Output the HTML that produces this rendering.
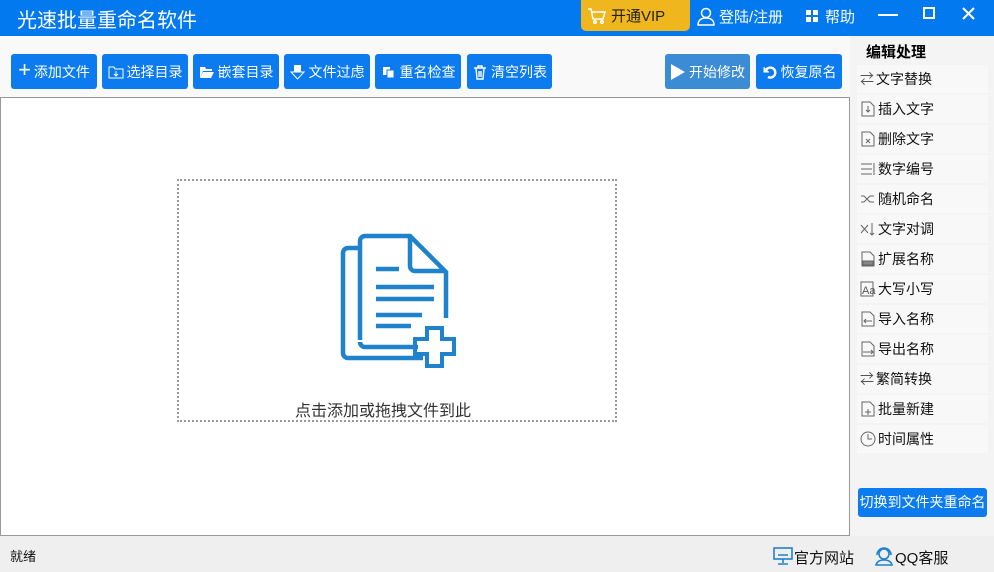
<!DOCTYPE html>
<html><head><meta charset="utf-8"><style>
*{margin:0;padding:0;box-sizing:border-box}
body{width:994px;height:572px;overflow:hidden;background:#f9f9f9;font-family:"Liberation Sans","Noto Sans CJK SC",sans-serif;position:relative;font-size:14px}
.abs{position:absolute}
.title{left:0;top:0;width:994px;height:36px;background:#0379f0;color:#fff}
.btn{position:absolute;top:54px;height:35px;background:#0b7bef;border-radius:3px;color:#fff;font-size:14px;display:flex;align-items:center;justify-content:center;gap:3px}
.side{left:850px;top:36px;width:144px;height:501px;background:#f4f4f4}
.item{position:absolute;left:857px;width:131px;height:28px;background:#f8f8f8;font-size:14px;color:#111;display:flex;align-items:center;padding-left:3px;gap:2px}
.ic{width:16px;height:16px;display:inline-block}
</style></head><body>
<div class="abs title">
 <div class="abs" style="left:17px;top:4px;font-size:20px">光速批量重命名软件</div>
 <div class="abs" style="left:581px;top:0;width:109px;height:31px;background:#f0b61e;border-radius:0 0 5px 5px;color:#222;font-size:15px;padding:5px 0 0 30px">开通VIP</div>
 <svg class="abs" style="left:587px;top:7px" width="20" height="18" viewBox="0 0 20 18" fill="none" stroke="#fff" stroke-width="1.5"><path d="M1 2h3l2 10h10l2-7H5"/><circle cx="8" cy="15" r="1.3"/><circle cx="15" cy="15" r="1.3"/></svg>
 <svg class="abs" style="left:696px;top:6px" width="20" height="20" viewBox="0 0 20 20" fill="none" stroke="#fff" stroke-width="1.5"><circle cx="10" cy="7" r="4.5"/><path d="M2 19c0-5 3.5-7 8-7s8 2 8 7z"/></svg>
 <div class="abs" style="left:719px;top:6px;font-size:15px">登陆/注册</div>
 <svg class="abs" style="left:806px;top:10px" width="12" height="12"><rect x="0" y="0" width="5" height="5" fill="#fff"/><rect x="7" y="0" width="5" height="5" fill="#fff"/><rect x="0" y="7" width="5" height="5" fill="#fff"/><rect x="7" y="7" width="5" height="5" fill="#fff"/></svg>
 <div class="abs" style="left:825px;top:6px;font-size:15px">帮助</div>
 <div class="abs" style="left:878px;top:14px;width:20px;height:2px;background:#fff"></div>
 <div class="abs" style="left:923px;top:7px;width:12px;height:12px;border:2px solid #fff"></div>
 <svg class="abs" style="left:962px;top:7px" width="13" height="13"><path d="M1 1L12 12M12 1L1 12" stroke="#fff" stroke-width="2"/></svg>
</div>
<div class="btn" style="left:11px;width:86px"><span style="font-size:22px;line-height:1;margin-top:-3px">+</span>添加文件</div>
<div class="btn" style="left:102px;width:86px"><svg class="ic" viewBox="0 0 16 16" fill="none" stroke="#fff"><path d="M1 3h5l1 2h8v9H1z"/><path d="M8 7v5M6 10l2 2 2-2"/></svg>选择目录</div>
<div class="btn" style="left:193px;width:86px"><svg class="ic" viewBox="0 0 16 16" fill="#fff"><path d="M1 3h5l1 2h6v2H4l-3 7z"/><path d="M4 8h11l-3 6H1z"/></svg>嵌套目录</div>
<div class="btn" style="left:284px;width:86px"><svg class="ic" viewBox="0 0 16 16" fill="#fff"><rect x="4" y="1" width="7" height="7"/><path d="M1 8h13l-6.5 7z" fill="none" stroke="#fff"/></svg>文件过虑</div>
<div class="btn" style="left:375px;width:86px"><svg class="ic" viewBox="0 0 16 16" fill="#fff"><rect x="2" y="3" width="7" height="8"/><rect x="6" y="6" width="7" height="8" stroke="#0b7bef"/></svg>重名检查</div>
<div class="btn" style="left:467px;width:85px"><svg class="ic" viewBox="0 0 16 16" fill="none" stroke="#fff" stroke-width="1.4"><path d="M2 4h12M6 4V2h4v2M4 4l1 11h6l1-11M7 7v6M9 7v6"/></svg>清空列表</div>
<div class="btn" style="left:665px;width:85px;background:#3b8bd5"><svg width="16" height="18"><path d="M1 1l14 8-14 8z" fill="#fff"/></svg>开始修改</div>
<div class="btn" style="left:756px;width:86px"><svg class="ic" viewBox="0 0 16 16" fill="none" stroke="#fff" stroke-width="2.4"><path d="M4 6a5 5 0 1 1 2 7"/><path d="M2 3v5h5" fill="#fff" stroke-width="1"/></svg>恢复原名</div>
<div class="abs" style="left:0;top:97px;width:850px;height:439px;background:#fff;border:1px solid #999"></div>
<div class="abs" style="left:177px;top:179px;width:440px;height:243px;border:2px dotted #999"></div>
<svg class="abs" style="left:320px;top:220px" width="150" height="150" viewBox="0 0 150 150" fill="none" stroke="#1f82cc" stroke-width="4.5"><path d="M40 28h-12a5 5 0 0 0-5 5v100a5 5 0 0 0 5 5h75"/><path d="M40 120V21a5 5 0 0 1 5-5h45l36 36v46M90 16v30a5 5 0 0 0 5 5h31M98 127H45a5 5 0 0 1-5-5"/><path d="M56 49h23M56 67h58M56 79h58M56 95h46M56 106h35"/><path d="M107 108h15v11h12v15h-12v12h-15v-12h-12v-15h12z" stroke-width="4"/></svg>
<div class="abs" style="left:295px;top:397px;font-size:16px;color:#333">点击添加或拖拽文件到此</div>
<div class="abs side"></div>
<div class="abs" style="left:866px;top:41px;font-weight:bold;font-size:15px;color:#000">编辑处理</div>
<div class="item" style="top:65px"><span style="color:#555">⇄</span>文字替换</div>
<div class="item" style="top:95px"><svg class="ic" viewBox="0 0 16 16" fill="none" stroke="#666"><path d="M2 1h8l4 4v10H2z"/><path d="M8 5v6M6 9l2 2 2-2"/></svg>插入文字</div>
<div class="item" style="top:125px"><svg class="ic" viewBox="0 0 16 16" fill="none" stroke="#666"><path d="M2 1h8l4 4v10H2z"/><path d="M6 8l4 4M10 8l-4 4"/></svg>删除文字</div>
<div class="item" style="top:155px"><svg class="ic" viewBox="0 0 16 16" fill="none" stroke="#666"><path d="M1 3h11M1 8h11M1 13h11M14 2v12"/></svg>数字编号</div>
<div class="item" style="top:185px"><svg class="ic" viewBox="0 0 16 16" fill="none" stroke="#666"><path d="M1 5h3l6 6h4M1 11h3l6-6h4"/></svg>随机命名</div>
<div class="item" style="top:215px"><svg class="ic" viewBox="0 0 16 16" fill="none" stroke="#666"><path d="M1 4l7 8M8 4l-7 8M12 2v12M10 12l2 2 2-2"/></svg>文字对调</div>
<div class="item" style="top:245px"><svg class="ic" viewBox="0 0 16 16" fill="none" stroke="#666"><path d="M2 1h8l4 4v10H2z"/><path d="M3 10h10v4H3z" fill="#888"/></svg>扩展名称</div>
<div class="item" style="top:275px"><svg class="ic" viewBox="0 0 16 16" fill="none" stroke="#666"><path d="M1 1h12v14H1z"/><text x="2" y="13" font-size="11" fill="#555" stroke="none">Aa</text></svg>大写小写</div>
<div class="item" style="top:305px"><svg class="ic" viewBox="0 0 16 16" fill="none" stroke="#666"><path d="M2 1h8l4 4v10H2z"/><path d="M12 10H4M6 8l-2 2 2 2"/></svg>导入名称</div>
<div class="item" style="top:335px"><svg class="ic" viewBox="0 0 16 16" fill="none" stroke="#666"><path d="M2 1h8l4 4v10H2z"/><path d="M3 11h10M11 9l2 2-2 2"/></svg>导出名称</div>
<div class="item" style="top:365px"><span style="color:#555">⇄</span>繁简转换</div>
<div class="item" style="top:395px"><svg class="ic" viewBox="0 0 16 16" fill="none" stroke="#666"><path d="M2 1h8l4 4v10H2z"/><path d="M8 8v6M5 11h6"/></svg>批量新建</div>
<div class="item" style="top:425px"><svg class="ic" viewBox="0 0 16 16" fill="none" stroke="#666"><circle cx="8" cy="8" r="7"/><path d="M8 3v5h4"/></svg>时间属性</div>
<div class="abs" style="left:858px;top:488px;width:129px;height:29px;background:#0b7bef;border-radius:3px;color:#fff;font-size:14px;text-align:center;line-height:29px">切换到文件夹重命名</div>
<div class="abs" style="left:0;top:536px;width:994px;height:36px;background:#efefef"></div>
<div class="abs" style="left:10px;top:546px;font-size:13px;color:#111">就绪</div>
<svg class="abs" style="left:773px;top:547px" width="20" height="18" viewBox="0 0 20 18" fill="none" stroke="#1f82cc" stroke-width="1.6"><rect x="1" y="1" width="18" height="11"/><path d="M10 12v4M5 17h10M5 8h10"/></svg>
<div class="abs" style="left:794px;top:547px;font-size:15px;color:#111">官方网站</div>
<svg class="abs" style="left:874px;top:546px" width="20" height="20" viewBox="0 0 20 20" fill="none" stroke="#1f82cc" stroke-width="1.6"><circle cx="10" cy="8" r="5"/><path d="M3 9a7 7 0 0 1 14 0M2 19c1-4 4-5 8-5s7 1 8 5z"/></svg>
<div class="abs" style="left:895px;top:547px;font-size:15px;color:#111">QQ客服</div>
</body></html>
